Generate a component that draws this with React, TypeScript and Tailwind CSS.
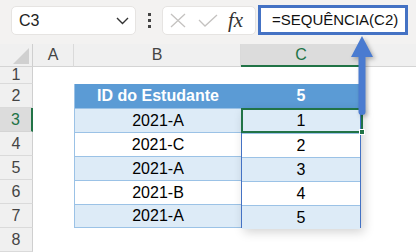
const font = { fontFamily: '"Liberation Sans", Arial, sans-serif' };

const rows = [
  { n: 3, id: '2021-A', v: 1 },
  { n: 4, id: '2021-C', v: 2 },
  { n: 5, id: '2021-A', v: 3 },
  { n: 6, id: '2021-B', v: 4 },
  { n: 7, id: '2021-A', v: 5 },
];

function RowHead({ n, active }: { n: number; active?: boolean }) {
  return (
    <div
      className={
        active
          ? 'flex items-center justify-center bg-[#dcdcdc] text-[#217346] border-r-2 border-[#217346] border-b border-b-[#d4d4d4] text-[16px]'
          : 'flex items-center justify-center bg-[#f0f0f0] text-[#444] border-r border-[#cfcfcf] border-b border-b-[#dadada] text-[16px]'
      }
    >
      {n}
    </div>
  );
}

export default function App() {
  return (
    <div className="relative w-[416px] h-[252px] overflow-hidden bg-white" style={font}>
      {/* formula bar */}
      <div className="h-[44px] bg-[#f3f2f1] flex items-start pt-[6px] pl-[11px]">
        <div className="w-[125px] h-[29px] rounded-[5px] bg-white border border-[#e6e4e2] flex items-center pl-[7px] pr-[6px]">
          <span className="text-[16px] text-[#222]">C3</span>
          <svg className="ml-auto" width="13" height="8" viewBox="0 0 13 8">
            <path d="M1 1 L6.5 6.5 L12 1" fill="none" stroke="#333" strokeWidth="1.4" />
          </svg>
        </div>
        <div className="w-[26px] h-[29px] flex flex-col items-center justify-center gap-[3px]">
          <span className="w-[3px] h-[3px] bg-[#444]" />
          <span className="w-[3px] h-[3px] bg-[#444]" />
          <span className="w-[3px] h-[3px] bg-[#444]" />
        </div>
        <div className="w-[94px] h-[29px] rounded-[5px] bg-white border border-[#e6e4e2] flex items-center pl-[7px]">
          <svg width="16" height="15" viewBox="0 0 16 15">
            <path d="M1 1 L15 14 M15 1 L1 14" stroke="#c4c2c0" strokeWidth="1.3" />
          </svg>
          <svg className="ml-[12px]" width="20" height="13" viewBox="0 0 20 13">
            <path d="M1 6 L7 12 L19 1" fill="none" stroke="#c4c2c0" strokeWidth="1.3" />
          </svg>
          <span
            className="ml-[10px] text-[21px] italic text-[#333] leading-none"
            style={{ fontFamily: '"Liberation Serif", "Times New Roman", serif' }}
          >
            fx
          </span>
        </div>
        <div className="ml-[2px] -mt-[1px] w-[150px] h-[30px] border-[3px] border-[#4472c4] bg-white flex items-center pl-[11px] text-[15px] text-[#111]">
          =SEQUÊNCIA(C2)
        </div>
      </div>

      {/* sheet */}
      <div className="grid grid-cols-[33px_41px_167px_120px_1fr] grid-rows-[23px_17px_repeat(7,24px)]">
        {/* column headers */}
        <div className="bg-[#f0f0f0] border-r border-[#cfcfcf] border-b border-b-[#d4d4d4] flex items-end justify-end pr-[3px] pb-[2px]">
          <svg width="16" height="16" viewBox="0 0 16 16">
            <path d="M16 0 L16 16 L0 16 Z" fill="#d0d0d0" />
          </svg>
        </div>
        <div className="bg-[#f0f0f0] border-r border-[#dadada] border-b border-b-[#d4d4d4] flex items-center justify-center text-[16px] text-[#444]">
          A
        </div>
        <div className="bg-[#f0f0f0] border-r border-[#dadada] border-b border-b-[#d4d4d4] flex items-center justify-center text-[16px] text-[#444]">
          B
        </div>
        <div className="bg-[#dcdcdc] border-b-2 border-[#217346] flex items-center justify-center text-[16px] text-[#217346]">
          C
        </div>
        <div className="bg-[#f0f0f0] border-b border-[#d4d4d4]" />

        {/* row 1 */}
        <RowHead n={1} />
        <div className="col-span-4" />

        {/* row 2 */}
        <RowHead n={2} />
        <div />
        <div className="bg-[#5b9bd5] border-l border-[#9bc2e6] flex items-center justify-center text-white font-bold text-[16px]">
          ID do Estudante
        </div>
        <div className="bg-[#5b9bd5] flex items-center justify-center text-white font-bold text-[16px]">5</div>
        <div />

        {/* rows 3-7 */}
        {rows.map((r, i) => (
          <div key={r.n} className="contents">
            <RowHead n={r.n} active={r.n === 3} />
            <div />
            <div
              className={
                (i % 2 === 0 ? 'bg-[#ddebf7] ' : 'bg-white ') +
                'border-l border-t border-[#9bc2e6] flex items-center justify-center text-[16px] text-black' +
                (r.n === 7 ? ' border-b' : '')
              }
            >
              {r.id}
            </div>
            {i === 0 ? (
              <div className="row-span-5 relative border border-[#4472c4] shadow-[3px_4px_10px_rgba(0,0,0,0.18)] flex flex-col">
                {rows.map((c, j) => (
                  <div
                    key={c.n}
                    className={
                      (j % 2 === 0 ? 'bg-[#ddebf7] ' : 'bg-white ') +
                      'h-[24px] flex items-center justify-center text-[16px] text-black' +
                      (j > 0 ? ' border-t border-[#9bc2e6]' : '')
                    }
                  >
                    {c.v}
                  </div>
                ))}
                <div className="absolute -left-px -top-px w-[122px] h-[25px] border-2 border-[#217346]" />
                <div className="absolute left-[117px] top-[20px] w-[6px] h-[6px] bg-[#217346] border border-white" />
              </div>
            ) : null}
            <div />
          </div>
        ))}

        {/* row 8 */}
        <RowHead n={8} />
        <div className="col-span-4" />
      </div>

      {/* arrow */}
      <svg
        className="absolute left-[351px] top-[36px] drop-shadow-[2px_2px_2px_rgba(0,0,0,0.3)]"
        width="22"
        height="80"
        viewBox="0 0 22 80"
      >
        <path d="M11 0 L22 21 L14.5 21 L14.5 76 Q14.5 79 11 79 Q7.5 79 7.5 76 L7.5 21 L0 21 Z" fill="#4a7bd0" />
      </svg>
    </div>
  );
}
